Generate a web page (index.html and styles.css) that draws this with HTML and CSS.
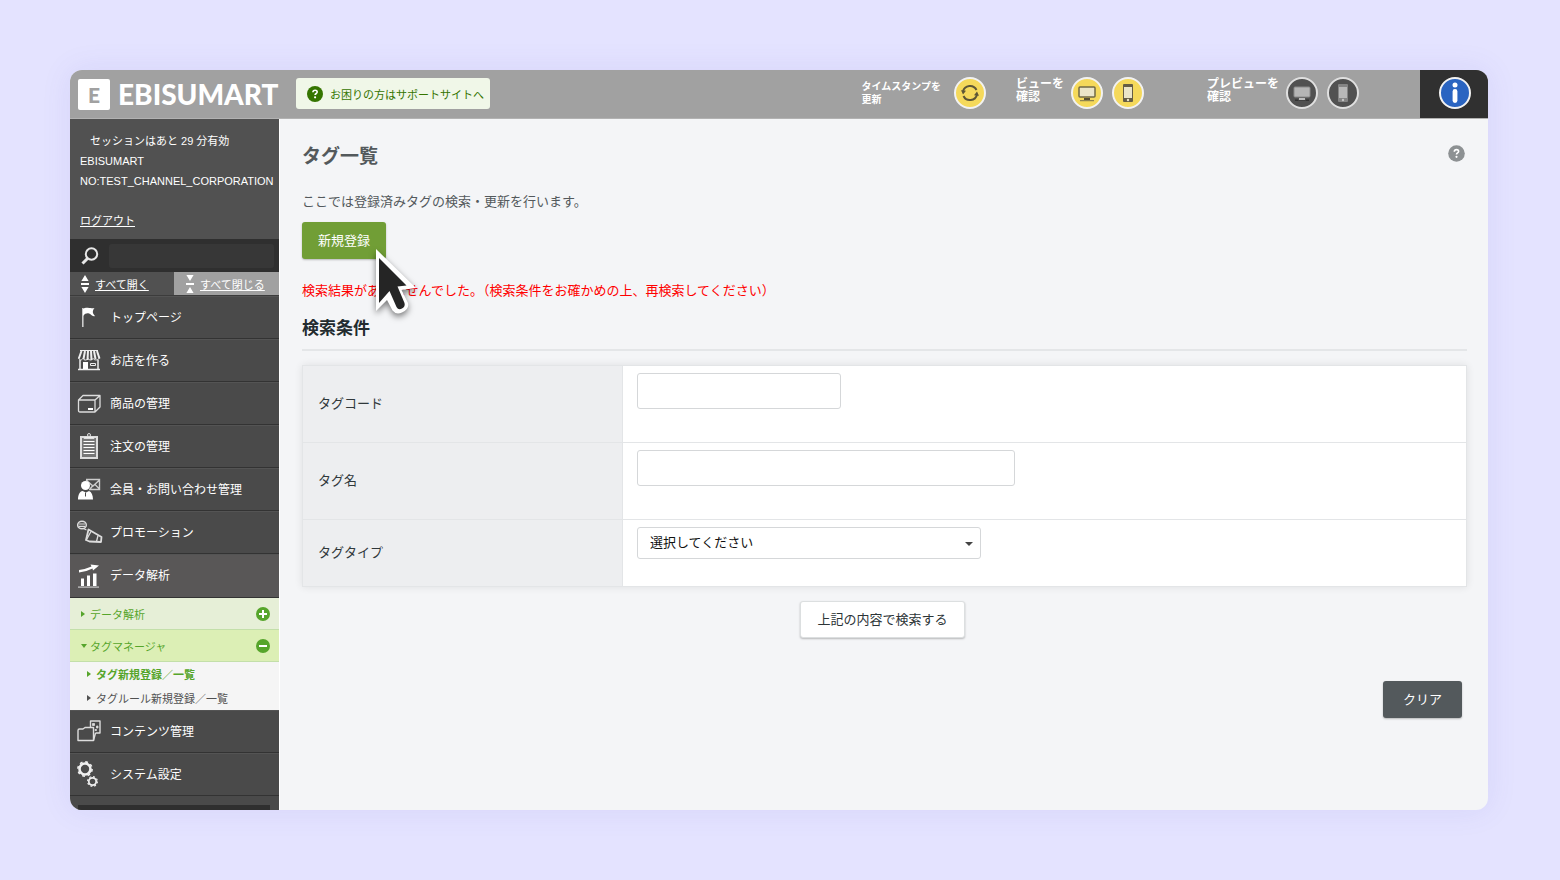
FILE: index.html
```
<!DOCTYPE html>
<html lang="ja">
<head>
  <meta charset="utf-8">
  <title>タグ一覧 | EBISUMART</title>
  <link rel="stylesheet" href="styles.css">
</head>
<body>

<div class="window">
  <header class="header">
    <a href="#" class="logo">
      <span class="logo-mark">E</span>
      <span class="logo-text">EBISUMART</span>
    </a>
    <a href="#" class="support-link">
      <svg width="16" height="16" viewBox="0 0 16 16"><circle cx="8" cy="8" r="8" fill="#357500"/><path d="M5.900 6.300C6 4.900 6.900 4.200 8.100 4.200c1.200 0 2.100.7 2.100 1.800 0 1.500-2.100 1.500-2.100 3.100" fill="none" stroke="#fff" stroke-width="1.600"/><circle cx="8.100" cy="11.300" r="1.100" fill="#fff"/></svg>
      お困りの方はサポートサイトへ
    </a>

    <div class="tool tool-time">
      <span class="tool-label tool-label-small">タイムスタンプを<br>更新</span>
      <button type="button" class="round yellow" aria-label="タイムスタンプを更新">
        <svg width="20" height="20" viewBox="0 0 20 20" fill="none" stroke="#5d5636" stroke-width="2"><path d="M3 8.500A7.200 7.200 0 0 1 16.500 7M17 11.500A7.200 7.200 0 0 1 3.500 13"/><path d="M1 7.300l5 .5-3 3.700zM19 12.700l-5-.5 3-3.700z" fill="#5d5636" stroke="none"/></svg>
      </button>
    </div>
    <div class="tool tool-view">
      <span class="tool-label">ビューを<br>確認</span>
      <button type="button" class="round yellow" aria-label="PCビューを確認">
        <svg width="20" height="18" viewBox="0 0 20 18"><rect x="2" y="3" width="16" height="10" rx="1" fill="#ebe5c8" stroke="#716945" stroke-width="1.500"/><path d="M7 14h6v2H7z" fill="#574f32"/><path d="M3 16h14v1.200H3z" fill="#8f844f"/></svg>
      </button>
      <button type="button" class="round yellow" aria-label="スマホビューを確認">
        <svg width="12" height="20" viewBox="0 0 12 20"><rect x="1" y="1" width="10" height="18" rx="1" fill="#655d45"/><rect x="2" y="4" width="8" height="11" fill="#ebe5c8"/><circle cx="6" cy="17" r="1.200" fill="#ebe5c8"/></svg>
      </button>
    </div>
    <div class="tool tool-preview">
      <span class="tool-label">プレビューを<br>確認</span>
      <button type="button" class="round gray" aria-label="PCプレビューを確認">
        <svg width="20" height="18" viewBox="0 0 20 18"><rect x="2" y="3" width="16" height="10" rx="1" fill="#b5b5b5" stroke="#8a8a8a"/><path d="M7 14h6v2H7z" fill="#bdbdbd"/><path d="M3 15.500h3v1h8v-1h3V17H3z" fill="#333"/></svg>
      </button>
      <button type="button" class="round gray" aria-label="スマホプレビューを確認">
        <svg width="12" height="20" viewBox="0 0 12 20"><rect x="1" y="1" width="10" height="18" rx="1" fill="#858585"/><rect x="2" y="4" width="8" height="11" fill="#b8b8b8"/><circle cx="6" cy="17" r="1.200" fill="#c5c5c5"/></svg>
      </button>
    </div>
    <div class="info">
      <button type="button" class="round blue" aria-label="お知らせ">
        <svg width="10" height="22" viewBox="0 0 10 22" fill="#fff"><circle cx="5" cy="3" r="2.500"/><rect x="2.600" y="7" width="4.800" height="14" rx="2.400"/></svg>
      </button>
    </div>
  </header>

  <div class="body">
    <aside class="sidebar">
      <div class="account">
        <p class="session">セッションはあと 29 分有効</p>
        <p>EBISUMART</p>
        <p>NO:TEST_CHANNEL_CORPORATION</p>
        <a href="#" class="logout">ログアウト</a>
      </div>
      <div class="side-search">
        <svg width="18" height="18" viewBox="0 0 18 18" fill="none" stroke="#e8e8e8"><circle cx="10.500" cy="7" r="5.700" stroke-width="2"/><path d="M6.500 11.500L1.500 16.500" stroke-width="3"/></svg>
        <input type="text" aria-label="メニュー検索">
      </div>
      <div class="toggles">
        <a href="#" class="toggle-open">
          <svg width="8" height="18" viewBox="0 0 8 18" fill="#fff"><path d="M4 0l3.600 6H.4zM0 8h8v2H0zM.4 12h7.200L4 18z"/></svg>
          <span>すべて開く</span>
        </a>
        <a href="#" class="toggle-close">
          <svg width="8" height="18" viewBox="0 0 8 18" fill="#fff"><path d="M.4 0h7.200L4 6zM0 8h8v2H0zM4 12l3.600 6H.4z"/></svg>
          <span>すべて閉じる</span>
        </a>
      </div>

      <nav>
        <a href="#" class="nav-item">
          <svg width="24" height="24" viewBox="0 0 24 24"><path d="M5.800 3v19" stroke="#ccc" stroke-width="1.600"/><path d="M6 4c4-2.500 6 0 11.500-1-2.500 3-2 5.500.5 8-3 1-4-2-6-2.500S8 8.500 6 11z" fill="#fff"/></svg>
          トップページ
        </a>
        <a href="#" class="nav-item">
          <svg width="24" height="24" viewBox="0 0 24 24" fill="none" stroke="#eee"><path d="M4.500 3L1.800 10.500M8 3L6.500 11M11 3l-.5 9M14 3l.5 9M17 3l1.500 8M20 3l2.500 7.500" stroke-width="2"/><path d="M3 2.500h18M1.500 10c1 2.500 3 2.500 4.500.5 1 2 3.500 2 5 0 1.500 2 4 2 5 0 1.500 2 5 2 6.500-.5"/><path d="M3 12v9M21 12v9M1 21.500h22" stroke-width="1.500"/><path d="M6 14h5v7H6z" fill="#fff" stroke="none"/><path d="M13.500 15.500h5v2h-5z" stroke-width="1"/></svg>
          お店を作る
        </a>
        <a href="#" class="nav-item">
          <svg width="24" height="24" viewBox="0 0 24 24" fill="none" stroke="#ddd" stroke-width="1.300" stroke-linejoin="round"><path d="M1.500 9h16.500v12H3q-1.500 0-1.500-1.500zM1.500 9l4.500-4.500h17L18 9M23 4.500V16l-5 5"/><path d="M11 18h5" stroke="#fff" stroke-width="2"/></svg>
          商品の管理
        </a>
        <a href="#" class="nav-item">
          <svg width="24" height="26" viewBox="0 0 24 26" fill="none" stroke="#ddd"><path d="M4 4h16v21H4z" fill="#777" stroke-width="2"/><path d="M6.500 8.500h11M6.500 11.500h11M6.500 14.500h11M6.500 17.500h11M6.500 20.500h11" stroke="#fff"/><path d="M7 3.500h10v2H7z" fill="#eee"/><circle cx="12" cy="2" r="1.500"/></svg>
          注文の管理
        </a>
        <a href="#" class="nav-item">
          <svg width="24" height="24" viewBox="0 0 24 24"><path d="M9 2.500h13.500v10H12M9 3l7 6 6.500-6M13 12l3-3.500M22.500 12L18 7.500" fill="none" stroke="#ccc" stroke-width="1.400"/><circle cx="8.500" cy="8.500" r="4.500" fill="#fff"/><path d="M1 22.500c0-5 2-8 4.500-8.500l3.500 1.500 3-1.500c2.500 1 4 4 4 8.500z" fill="#fff"/><path d="M8.500 15.500v4" stroke="#4a4a4a"/></svg>
          会員・お問い合わせ管理
        </a>
        <a href="#" class="nav-item">
          <svg width="26" height="24" viewBox="0 0 26 24" fill="none" stroke="#ddd" stroke-width="1.500" stroke-linejoin="round"><ellipse cx="5" cy="5" rx="4.300" ry="3.800"/><path d="M2 4h6M2 6.300h6M6.500 8.500l3 1.500" stroke-width="1.200"/><path d="M11.500 9.500L9 20l3.500 1.500L24 22l.5-5z" stroke-width="1.800"/><path d="M14 11.500l-5 9M21 15.500l-1.500 6" stroke-width="1.300"/></svg>
          プロモーション
        </a>
        <a href="#" class="nav-item active">
          <svg width="24" height="24" viewBox="0 0 24 24" fill="#fff"><path d="M4 14.500h3V22H4zM10 11.500h3V22h-3zM16 9.500h3.500V22H16z"/><path d="M1 22.500h21v1.200H1z" fill="#ccc"/><path d="M2 6Q9 5 14.500 2.500L13.500.5 22 1.500l-6 5-.5-2Q10 7.500 2 8.500z"/></svg>
          データ解析
        </a>
        <a href="#" class="sub-item">
          <span class="arrow-right"></span>データ解析
          <svg width="14" height="14" viewBox="0 0 14 14"><circle cx="7" cy="7" r="7" fill="#56a52b"/><path d="M3 7h8M7 3v8" stroke="#fff" stroke-width="2"/></svg>
        </a>
        <a href="#" class="sub-item open">
          <span class="arrow-down"></span>タグマネージャ
          <svg width="14" height="14" viewBox="0 0 14 14"><circle cx="7" cy="7" r="7" fill="#56a52b"/><path d="M3 7h8" stroke="#fff" stroke-width="2"/></svg>
        </a>
        <div class="leaf-list">
          <a href="#" class="leaf current"><span class="arrow-right"></span>タグ新規登録／一覧</a>
          <a href="#" class="leaf"><span class="arrow-right"></span>タグルール新規登録／一覧</a>
        </div>
        <a href="#" class="nav-item">
          <svg width="26" height="24" viewBox="0 0 26 24" fill="none" stroke="#ddd" stroke-width="1.400" stroke-linejoin="round"><path d="M1 21.500V11.500Q1 10 2.500 10H6l2-1.500h8.500v13z"/><path d="M13.500 8V2h9.500v12h-4.500M18.500 14l-2 7.500"/><path d="M15.500 4.500h2v2h-2zM19.500 7h1.500v2h-1.500zM18 10.500h1.500v1H18z" fill="#ddd" stroke-width=".8"/></svg>
          コンテンツ管理
        </a>
        <a href="#" class="nav-item">
          <svg width="24" height="26" viewBox="0 0 24 26" fill="none" stroke="#eee"><circle cx="8" cy="8" r="5.500" stroke-width="2.600"/><circle cx="8" cy="8" r="7.100" stroke-width="1.600" stroke-dasharray="2.780 2.800"/><circle cx="15.500" cy="20.500" r="3.700" stroke-width="1.800"/><circle cx="15.500" cy="20.500" r="4.900" stroke-width="1.200" stroke-dasharray="1.900 1.950"/></svg>
          システム設定
        </a>
      </nav>
      <div class="side-foot"></div>
    </aside>

    <main class="main">
      <div class="title-row">
        <h1>タグ一覧</h1>
        <a href="#" aria-label="ヘルプ">
          <svg width="17" height="17" viewBox="0 0 17 17"><circle cx="8.500" cy="8.500" r="8.300" fill="#8d9193"/><path d="M6.300 6.700c.1-1.400 1-2.100 2.200-2.100s2.100.7 2.100 1.800c0 1.500-2.100 1.500-2.100 3.100" fill="none" stroke="#fff" stroke-width="1.600"/><circle cx="8.500" cy="11.800" r="1.100" fill="#fff"/></svg>
        </a>
      </div>
      <p class="lead">ここでは登録済みタグの検索・更新を行います。</p>
      <div class="create">
        <button type="button" class="btn btn-green">新規登録</button>
        <svg class="cursor" width="48" height="76" viewBox="0 0 48 76"><path d="M6 3L6 65 17 54 22.500 64.500Q26 69 32 66.500 39.500 63 38 57L31.500 44 46 42Z" fill="#fff"/><path d="M9 12L9 57 19.500 45 26.500 61Q28.500 64.500 32 62.500 35.500 60.500 34.500 57L27.500 40.500 36.500 39.500Z" fill="#252525"/></svg>
      </div>
      <p class="error">検索結果がありませんでした。（検索条件をお確かめの上、再検索してください）</p>
      <h2>検索条件</h2>

      <form onsubmit="return false">
        <table class="conditions">
          <tr>
            <th><label for="tag-code">タグコード</label></th>
            <td><input type="text" id="tag-code" class="field field-short"></td>
          </tr>
          <tr>
            <th><label for="tag-name">タグ名</label></th>
            <td><input type="text" id="tag-name" class="field field-long"></td>
          </tr>
          <tr class="row-type">
            <th><label for="tag-type">タグタイプ</label></th>
            <td>
              <div class="select-wrap">
                <select id="tag-type" class="field">
                  <option>選択してください</option>
                </select>
              </div>
            </td>
          </tr>
        </table>
        <div class="submit-row">
          <button type="submit" class="btn btn-white">上記の内容で検索する</button>
        </div>
        <div class="clear-row">
          <button type="reset" class="btn btn-dark">クリア</button>
        </div>
      </form>
    </main>
  </div>
</div>

</body>
</html>
```
FILE: styles.css
```
* {
  box-sizing: border-box;
}
body {
  margin: 0;
  height: 100vh;
  padding: 70px 72px 70px 70px;
  background: #e4e3ff;
  font-family: "Liberation Sans", "Noto Sans CJK JP", sans-serif;
  font-size: 13px;
}
p, h1, h2 {
  margin: 0;
}
a {
  color: inherit;
  text-decoration: none;
}
svg {
  display: block;
  flex: none;
}
button, input, select {
  font-family: inherit;
  font-size: 13px;
}
.window {
  display: flex;
  flex-direction: column;
  height: 100%;
  overflow: hidden;
  border-radius: 12px;
  background: #f4f5f7;
  box-shadow: 0 0 30px rgba(90, 80, 200, 0.1);
}

/* header */
.header {
  display: flex;
  flex: none;
  height: 49px;
  background: #a1a1a1;
  border-bottom: 1px solid #b2b2b2;
  color: #fff;
}
.logo {
  display: flex;
  align-items: center;
  gap: 8px;
  padding-left: 8px;
  width: 226px;
}
.logo-mark {
  width: 32px;
  height: 31px;
  padding-left: 10px;
  border-radius: 2px;
  background: #fff;
  color: #a1a1a1;
  font: 900 21px/31px Lato, sans-serif;
}
.logo-text {
  font: 900 28px/31px Lato, sans-serif;
}
.support-link {
  display: flex;
  align-items: center;
  gap: 7px;
  height: 31px;
  margin: 8px auto 0 0;
  padding: 0 6px 0 11px;
  border-radius: 3px;
  background: #f0f7e8;
  color: #357500;
  font-size: 11px;
}
.tool {
  display: flex;
  padding-top: 7px;
}
.tool-label {
  margin-right: 7px;
  padding-top: 1px;
  font-size: 12px;
  font-weight: bold;
  line-height: 13px;
}
.tool-label-small {
  margin-right: 13px;
  padding-top: 3px;
  font-size: 10px;
}
.tool-view {
  margin-left: 30px;
}
.tool-preview {
  margin: 0 61px 0 63px;
}
.round {
  display: flex;
  align-items: center;
  justify-content: center;
  width: 32px;
  height: 32px;
  padding: 0;
  border: 2px solid #f2f2f2;
  border-radius: 50%;
}
.round + .round {
  margin-left: 9px;
}
.yellow {
  background: #f5d95b;
}
.gray {
  border-color: #e0e0e0;
  background: #515151;
}
.blue {
  background: #2a64c1;
}
.info {
  display: flex;
  justify-content: center;
  width: 68px;
  padding: 7px 0 0 2px;
  background: #303030;
}

/* sidebar */
.body {
  display: flex;
  flex: 1;
  min-height: 0;
}
.sidebar {
  flex: none;
  width: 209px;
  overflow: hidden;
  background: #4a4a4a;
  color: #fff;
  font-size: 11px;
}
.account {
  height: 120px;
  padding: 12px 0 0 10px;
  background: #515151;
  line-height: 20px;
  white-space: nowrap;
}
.session {
  padding-left: 10px;
}
.logout {
  display: inline-block;
  margin-top: 20px;
  text-decoration: underline;
}
.side-search {
  display: flex;
  align-items: center;
  gap: 10px;
  height: 33px;
  padding: 0 5px 0 11px;
  background: #2f2f2f;
}
.side-search input {
  flex: 1;
  min-width: 0;
  height: 24px;
  border: 0;
  border-radius: 3px;
  background: #373737;
  color: #fff;
}
.toggles {
  display: flex;
  height: 24px;
  border-bottom: 1px solid #3c3c3c;
}
.toggles a {
  display: flex;
  align-items: center;
  gap: 6px;
  padding-left: 11px;
}
.toggles span {
  padding-top: 1px;
  text-decoration: underline;
}
.toggle-open {
  width: 104px;
  background: #515151;
}
.toggle-close {
  flex: 1;
  background: #a1a1a1;
}
.toggles .toggle-close {
  padding-left: 12px;
}
.nav-item {
  display: grid;
  grid-template-columns: 26px 1fr;
  gap: 7px;
  align-items: center;
  height: 43px;
  padding: 0 8px 3px 7px;
  border-top: 1px solid #545454;
  border-bottom: 1px solid #333;
  font-size: 12px;
}
.nav-item svg {
  margin-top: 2px;
}
.nav-item.active {
  height: 44px;
  background: #595757;
}
.sub-item {
  display: flex;
  align-items: center;
  height: 32px;
  padding: 0 9px 0 11px;
  border-bottom: 1px solid #c3dfa9;
  background: #e6efd7;
  color: #56a52b;
}
.sub-item.open {
  background: #dcefb5;
}
.sub-item svg {
  margin-left: auto;
}
.arrow-right,
.arrow-down {
  width: 9px;
}
.arrow-right::before,
.arrow-down::before {
  content: "";
  display: block;
  width: 0;
  border: 3px solid transparent;
}
.arrow-right::before {
  border-left: 4px solid currentColor;
  border-right: 0;
}
.arrow-down::before {
  border-top: 4px solid currentColor;
  border-bottom: 0;
}
.leaf-list {
  background: #f5f5f5;
  color: #515151;
}
.leaf {
  display: flex;
  align-items: center;
  height: 24px;
  padding-left: 17px;
}
.leaf.current {
  color: #56a52b;
  font-weight: bold;
}
.side-foot {
  height: 20px;
  margin: 9px 9px 0 8px;
  background: #2f2f2f;
}

/* main */
.main {
  flex: 1;
  padding: 24px 21px 0 22px;
  border-left: 1px solid #fff;
  color: #53595c;
}
.title-row {
  display: flex;
  justify-content: space-between;
  padding-right: 2px;
}
.title-row a {
  padding-top: 2px;
}
h1 {
  font-size: 19px;
  line-height: 28px;
}
.lead {
  margin-top: 21px;
  line-height: 20px;
}
.create {
  position: relative;
  display: flex;
  margin-top: 10px;
}
.cursor {
  position: absolute;
  top: 24px;
  left: 68px;
  filter: drop-shadow(0 3px 3px rgba(0, 0, 0, 0.5));
}
.btn {
  height: 37px;
  padding: 0 16px 3px;
  border: 0;
  border-radius: 3px;
  box-shadow: 0 1px 2px rgba(0, 0, 0, 0.25);
}
.btn-green {
  background: #719e36;
  color: #fff;
}
.btn-white {
  border: 1px solid #dcdfe0;
  background: #fff;
  color: #2c3437;
}
.btn-dark {
  padding: 0 20px 3px;
  background: #53595c;
  color: #fff;
}
.error {
  margin-top: 22px;
  color: #f00;
  line-height: 20px;
}
h2 {
  margin-top: 16px;
  padding-bottom: 8px;
  border-bottom: 2px solid #e4e6e8;
  color: #222b2f;
  font-size: 17px;
  line-height: 24px;
}
.conditions {
  width: 100%;
  margin-top: 14px;
  border-collapse: collapse;
  border: 1px solid #e0e2e4;
  background: #fff;
  box-shadow: 0 0 8px rgba(0, 0, 0, 0.09);
}
.conditions tr {
  height: 77px;
}
.conditions .row-type {
  height: 67px;
}
.conditions th,
.conditions td {
  border: 1px solid #e3e5e7;
}
.conditions th {
  width: 320px;
  padding: 0 15px 3px;
  background: #edeef0;
  color: #30383b;
  font-weight: normal;
  text-align: left;
}
.conditions td {
  padding: 7px 14px 0;
  vertical-align: top;
}
.field {
  display: block;
  height: 36px;
  padding: 0 12px;
  border: 1px solid #d5d7d9;
  border-radius: 3px;
  background: #fff;
  color: #111;
}
.field-short {
  width: 204px;
}
.field-long {
  width: 378px;
}
.select-wrap {
  position: relative;
  width: 344px;
}
.select-wrap .field {
  width: 100%;
  height: 32px;
  padding-bottom: 2px;
  appearance: none;
}
.select-wrap::after {
  content: "";
  position: absolute;
  top: 15px;
  right: 8px;
  border: 4px solid transparent;
  border-top-color: #444;
  border-bottom: 0;
}
.submit-row {
  display: flex;
  justify-content: center;
  margin-top: 14px;
  padding-right: 4px;
}
.clear-row {
  display: flex;
  justify-content: flex-end;
  margin-top: 43px;
  padding-right: 5px;
}
```
